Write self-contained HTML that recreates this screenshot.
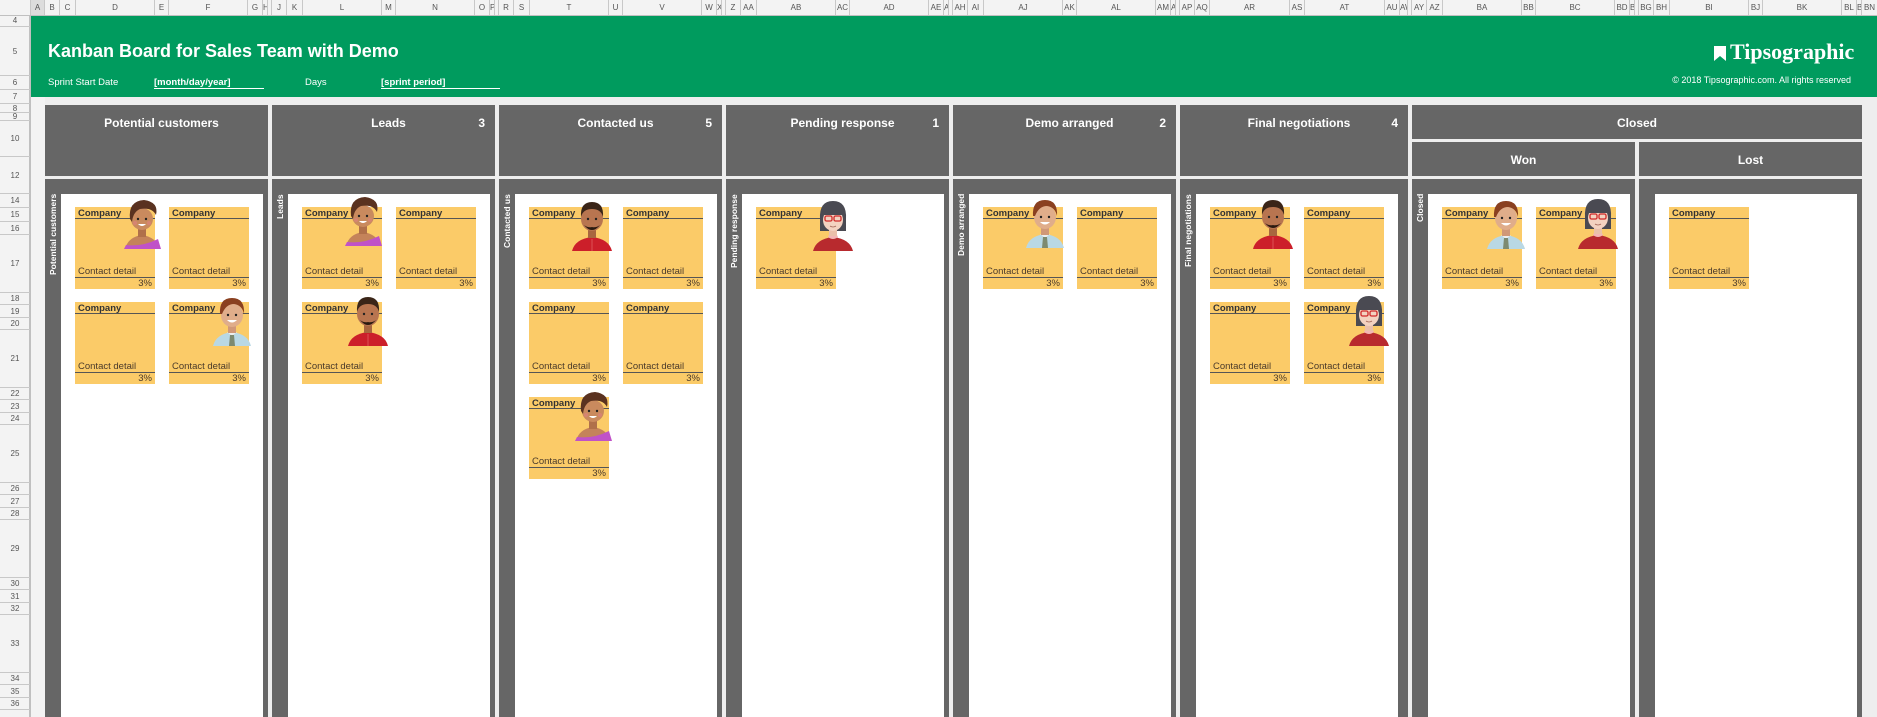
<!DOCTYPE html>
<html><head><meta charset="utf-8">
<style>
*{margin:0;padding:0;box-sizing:border-box}
body{width:1877px;height:717px;overflow:hidden;background:#eeeeee;font-family:"Liberation Sans",Arial,sans-serif;position:relative}
.abs{position:absolute}
#colhdr{position:absolute;left:0;top:0;width:1877px;height:16px;background:#f3f3f3;border-bottom:1px solid #c0c0c0}
.blk{position:absolute;top:0;height:15px;display:flex}
.blk div,.ch{height:15px;border-right:1px solid #c8c8c8;font-size:8px;color:#555;text-align:center;line-height:15px;overflow:hidden;flex:none}
#rowhdr{position:absolute;left:0;top:16px;width:31px;height:701px;background:#f3f3f3;border-right:2px solid #c0c0c0}
.rn{position:absolute;left:0;width:30px;font-size:8px;color:#555;text-align:center;border-bottom:1px solid #c8c8c8}
#green{position:absolute;left:31px;top:16px;width:1846px;height:81px;background:#009b5e;color:#fff}
.hd{position:absolute;background:#666;color:#fff;font-weight:bold;font-size:12px}
.hd .t{position:absolute;left:0;right:0;top:11px;text-align:center}
.hd .n{position:absolute;right:10px;top:11px}
.body{position:absolute;top:179px;height:538px;background:#666}
.wh{position:absolute;top:15px;bottom:0;background:#fff}
.vl{position:absolute;left:0;top:15px;width:16px;writing-mode:vertical-rl;transform:rotate(180deg);color:#fff;font-size:8.5px;font-weight:bold;line-height:16px;text-align:right;height:120px}
.card{position:absolute;width:80px;height:82px;background:#fbcb68;font-size:9.5px;color:#4a3a2a}
.card .c{position:absolute;left:3px;top:1px;font-weight:bold;color:#333}
.card .l1{position:absolute;left:0;right:0;top:11px;height:1px;background:#555}
.card .cd{position:absolute;left:3px;top:59px}
.card .l2{position:absolute;left:0;right:0;top:70px;height:1px;background:#555}
.card .p{position:absolute;right:3px;top:71px}
.av{position:absolute;width:40px;height:54px}
</style></head><body>
<svg width="0" height="0" style="position:absolute">
<defs>
<symbol id="w1" viewBox="0 0 40 54"><path d="M3 54 Q6 42 20 40 Q34 42 38 54Z" fill="#c4835a"/><path d="M2 54 L4 50 Q20 52 36 44 L39 54Z" fill="#c052c8"/><rect x="16" y="32" width="8" height="10" fill="#b0704a"/><circle cx="20" cy="24" r="11" fill="#c98a5e"/><path d="M8 24 Q6 6 22 5 Q37 7 34 20 Q30 12 18 14 Q11 17 10 27Z" fill="#5a3220"/><circle cx="16" cy="24" r="1.2" fill="#222"/><circle cx="24" cy="24" r="1.2" fill="#222"/><path d="M16 29 Q20 33 24 29Z" fill="#fff"/><circle cx="13" cy="28" r="2" fill="#e08080" opacity=".6"/><circle cx="27" cy="28" r="2" fill="#e08080" opacity=".6"/></symbol>
<symbol id="m1" viewBox="0 0 40 54"><path d="M1 54 Q4 42 20 40 Q36 42 39 54Z" fill="#b9d8e4"/><path d="M15 40 L20 44 L25 40 Z" fill="#eee"/><path d="M18 43 L22 43 L23 54 L17 54Z" fill="#7d8a70"/><rect x="16" y="32" width="8" height="9" fill="#d09878"/><ellipse cx="20" cy="23" rx="11" ry="12" fill="#e0ad8a"/><path d="M8 22 Q7 6 20 6 Q33 6 32 22 Q30 13 22 12 Q14 12 10 22Z" fill="#8a4020"/><circle cx="16" cy="23" r="1.2" fill="#222"/><circle cx="24" cy="23" r="1.2" fill="#222"/><path d="M15 28 Q20 33 25 28Z" fill="#fff"/></symbol>
<symbol id="m2" viewBox="0 0 40 54"><path d="M0 54 Q3 42 20 40 Q37 42 40 54Z" fill="#cc1f2a"/><path d="M20 42 L20 54" stroke="#e06060" stroke-width=".8"/><rect x="16" y="32" width="8" height="9" fill="#a8663f"/><ellipse cx="20" cy="22" rx="11" ry="12" fill="#b87550"/><path d="M9 20 Q8 5 20 5 Q32 5 31 20 Q29 12 20 12 Q11 12 9 20Z" fill="#3a2518"/><path d="M12 28 Q20 38 28 28 Q24 31 20 30 Q16 31 12 28Z" fill="#2a1a10"/><circle cx="16" cy="22" r="1.2" fill="#222"/><circle cx="24" cy="22" r="1.2" fill="#222"/></symbol>
<symbol id="w2" viewBox="0 0 40 54"><path d="M0 54 Q3 42 20 40 Q37 42 40 54Z" fill="#b82a2e"/><path d="M15 40 Q20 44 25 40 L24 38 L16 38Z" fill="#f3b6b6"/><path d="M7 22 Q6 4 20 4 Q34 4 33 22 L33 34 L7 34Z" fill="#4a4a52"/><rect x="16" y="31" width="8" height="8" fill="#eac0aa"/><ellipse cx="20" cy="23" rx="10" ry="11" fill="#f3d2c0"/><path d="M9 18 Q10 8 20 8 Q30 8 31 18 L9 18Z" fill="#4a4a52"/><rect x="12" y="19" width="7" height="5" rx="1.5" fill="none" stroke="#d02a2a" stroke-width="1.3"/><rect x="21" y="19" width="7" height="5" rx="1.5" fill="none" stroke="#d02a2a" stroke-width="1.3"/><path d="M17 29 Q20 31 23 29" stroke="#a06050" fill="none" stroke-width=".8"/></symbol>
</defs></svg>

<div id="colhdr">
<div class="ch abs" style="left:0;width:31px;background:#f3f3f3"></div>
<div class="ch abs" style="left:31px;width:14px;background:#ddd">A</div>
<div class="blk" style="left:45px"><div style="width:15px">B</div><div style="width:16px">C</div><div style="width:79px">D</div><div style="width:14px">E</div><div style="width:79px">F</div><div style="width:15px">G</div><div style="width:5px">H</div><div style="width:4px"></div></div>
<div class="blk" style="left:272px"><div style="width:15px">J</div><div style="width:16px">K</div><div style="width:79px">L</div><div style="width:14px">M</div><div style="width:79px">N</div><div style="width:15px">O</div><div style="width:5px">P</div><div style="width:4px"></div></div>
<div class="blk" style="left:499px"><div style="width:15px">R</div><div style="width:16px">S</div><div style="width:79px">T</div><div style="width:14px">U</div><div style="width:79px">V</div><div style="width:15px">W</div><div style="width:5px">X</div><div style="width:4px"></div></div>
<div class="blk" style="left:726px"><div style="width:15px">Z</div><div style="width:16px">AA</div><div style="width:79px">AB</div><div style="width:14px">AC</div><div style="width:79px">AD</div><div style="width:15px">AE</div><div style="width:5px">AF</div><div style="width:4px"></div></div>
<div class="blk" style="left:953px"><div style="width:15px">AH</div><div style="width:16px">AI</div><div style="width:79px">AJ</div><div style="width:14px">AK</div><div style="width:79px">AL</div><div style="width:15px">AM</div><div style="width:5px">AN</div><div style="width:4px"></div></div>
<div class="blk" style="left:1180px"><div style="width:15px">AP</div><div style="width:15px">AQ</div><div style="width:80px">AR</div><div style="width:15px">AS</div><div style="width:80px">AT</div><div style="width:15px">AU</div><div style="width:8px">AW</div><div style="width:4px"></div></div>
<div class="blk" style="left:1412px"><div style="width:15px">AY</div><div style="width:16px">AZ</div><div style="width:79px">BA</div><div style="width:14px">BB</div><div style="width:79px">BC</div><div style="width:15px">BD</div><div style="width:5px">BE</div><div style="width:4px"></div></div>
<div class="blk" style="left:1639px"><div style="width:15px">BG</div><div style="width:16px">BH</div><div style="width:79px">BI</div><div style="width:14px">BJ</div><div style="width:79px">BK</div><div style="width:15px">BL</div><div style="width:5px">BM</div><div style="width:16px">BN</div></div>
</div>

<div id="rowhdr">
<div class="rn" style="top:0;height:11px;line-height:10px">4</div>
<div class="rn" style="top:11px;height:49px;line-height:49px">5</div>
<div class="rn" style="top:60px;height:14px;line-height:14px">6</div>
<div class="rn" style="top:74px;height:14px;line-height:14px">7</div>
<div class="rn" style="top:88px;height:9px;line-height:9px">8</div>
<div class="rn" style="top:97px;height:8px;line-height:8px">9</div>
<div class="rn" style="top:105px;height:36px;line-height:36px">10</div>
<div class="rn" style="top:141px;height:37px;line-height:37px">12</div>
<div class="rn" style="top:178px;height:14px;line-height:14px">14</div>
<div class="rn" style="top:192px;height:14px;line-height:14px">15</div>
<div class="rn" style="top:206px;height:13px;line-height:13px">16</div>
<div class="rn" style="top:219px;height:58px;line-height:58px">17</div>
<div class="rn" style="top:277px;height:12px;line-height:12px">18</div>
<div class="rn" style="top:289px;height:13px;line-height:13px">19</div>
<div class="rn" style="top:302px;height:12px;line-height:12px">20</div>
<div class="rn" style="top:314px;height:58px;line-height:58px">21</div>
<div class="rn" style="top:372px;height:12px;line-height:12px">22</div>
<div class="rn" style="top:384px;height:13px;line-height:13px">23</div>
<div class="rn" style="top:397px;height:12px;line-height:12px">24</div>
<div class="rn" style="top:409px;height:58px;line-height:58px">25</div>
<div class="rn" style="top:467px;height:12px;line-height:12px">26</div>
<div class="rn" style="top:479px;height:13px;line-height:13px">27</div>
<div class="rn" style="top:492px;height:12px;line-height:12px">28</div>
<div class="rn" style="top:504px;height:58px;line-height:58px">29</div>
<div class="rn" style="top:562px;height:12px;line-height:12px">30</div>
<div class="rn" style="top:574px;height:13px;line-height:13px">31</div>
<div class="rn" style="top:587px;height:12px;line-height:12px">32</div>
<div class="rn" style="top:599px;height:58px;line-height:58px">33</div>
<div class="rn" style="top:657px;height:12px;line-height:12px">34</div>
<div class="rn" style="top:669px;height:13px;line-height:13px">35</div>
<div class="rn" style="top:682px;height:12px;line-height:12px">36</div>
</div>
<div class="abs" style="left:31px;top:97px;width:14px;height:620px;background:#f3f3f3"></div>

<div id="green">
<div class="abs" style="left:17px;top:25px;font-size:18px;font-weight:bold">Kanban Board for Sales Team with Demo</div>
<div class="abs" style="left:17px;top:61px;font-size:9.5px">Sprint Start Date</div>
<div class="abs" style="left:123px;top:61px;width:110px;height:12px;border-bottom:1px solid #fff;font-size:9.5px;font-weight:bold">[month/day/year]</div>
<div class="abs" style="left:274px;top:61px;font-size:9.5px">Days</div>
<div class="abs" style="left:350px;top:61px;width:119px;height:12px;border-bottom:1px solid #fff;font-size:9.5px;font-weight:bold">[sprint period]</div>
<svg class="abs" style="left:1683px;top:30px" width="12" height="15" viewBox="0 0 12 15"><path d="M0 0 H12 V15 L6 10 L0 15Z" fill="#fff"/></svg>
<div class="abs" style="left:1699px;top:23px;font-family:'Liberation Serif',serif;font-size:22px;font-weight:bold">Tipsographic</div>
<div class="abs" style="right:26px;top:59px;font-size:9px">© 2018 Tipsographic.com. All rights reserved</div>
</div>

<div class="hd" style="left:45px;top:105px;width:223px;height:71px"><div class="t" style="left:10px">Potential customers</div></div>
<div class="hd" style="left:272px;top:105px;width:223px;height:71px"><div class="t" style="left:10px">Leads</div><div class="n">3</div></div>
<div class="hd" style="left:499px;top:105px;width:223px;height:71px"><div class="t" style="left:10px">Contacted us</div><div class="n">5</div></div>
<div class="hd" style="left:726px;top:105px;width:223px;height:71px"><div class="t" style="left:10px">Pending response</div><div class="n">1</div></div>
<div class="hd" style="left:953px;top:105px;width:223px;height:71px"><div class="t" style="left:10px">Demo arranged</div><div class="n">2</div></div>
<div class="hd" style="left:1180px;top:105px;width:228px;height:71px"><div class="t" style="left:10px">Final negotiations</div><div class="n">4</div></div>
<div class="hd" style="left:1412px;top:105px;width:450px;height:34px"><div class="t">Closed</div></div>
<div class="hd" style="left:1412px;top:142px;width:223px;height:34px"><div class="t">Won</div></div>
<div class="hd" style="left:1639px;top:142px;width:223px;height:34px"><div class="t">Lost</div></div>

<div class="body" style="left:45px;width:223px"><div class="vl">Potential customers</div><div class="wh" style="left:16px;right:5px"></div></div>
<div class="body" style="left:272px;width:223px"><div class="vl">Leads</div><div class="wh" style="left:16px;right:5px"></div></div>
<div class="body" style="left:499px;width:223px"><div class="vl">Contacted us</div><div class="wh" style="left:16px;right:5px"></div></div>
<div class="body" style="left:726px;width:223px"><div class="vl">Pending response</div><div class="wh" style="left:16px;right:5px"></div></div>
<div class="body" style="left:953px;width:223px"><div class="vl">Demo arranged</div><div class="wh" style="left:16px;right:5px"></div></div>
<div class="body" style="left:1180px;width:228px"><div class="vl">Final negotiations</div><div class="wh" style="left:16px;right:10px"></div></div>
<div class="body" style="left:1412px;width:223px"><div class="vl">Closed</div><div class="wh" style="left:16px;right:5px"></div></div>
<div class="body" style="left:1639px;width:223px"><div class="wh" style="left:16px;right:5px"></div></div>

<div class="card" style="left:75px;top:207px"><div class="c">Company</div><div class="l1"></div><div class="cd">Contact detail</div><div class="l2"></div><div class="p">3%</div></div>
<div class="card" style="left:169px;top:207px"><div class="c">Company</div><div class="l1"></div><div class="cd">Contact detail</div><div class="l2"></div><div class="p">3%</div></div>
<div class="card" style="left:75px;top:302px"><div class="c">Company</div><div class="l1"></div><div class="cd">Contact detail</div><div class="l2"></div><div class="p">3%</div></div>
<div class="card" style="left:169px;top:302px"><div class="c">Company</div><div class="l1"></div><div class="cd">Contact detail</div><div class="l2"></div><div class="p">3%</div></div>

<div class="card" style="left:302px;top:207px"><div class="c">Company</div><div class="l1"></div><div class="cd">Contact detail</div><div class="l2"></div><div class="p">3%</div></div>
<div class="card" style="left:396px;top:207px"><div class="c">Company</div><div class="l1"></div><div class="cd">Contact detail</div><div class="l2"></div><div class="p">3%</div></div>
<div class="card" style="left:302px;top:302px"><div class="c">Company</div><div class="l1"></div><div class="cd">Contact detail</div><div class="l2"></div><div class="p">3%</div></div>

<div class="card" style="left:529px;top:207px"><div class="c">Company</div><div class="l1"></div><div class="cd">Contact detail</div><div class="l2"></div><div class="p">3%</div></div>
<div class="card" style="left:623px;top:207px"><div class="c">Company</div><div class="l1"></div><div class="cd">Contact detail</div><div class="l2"></div><div class="p">3%</div></div>
<div class="card" style="left:529px;top:302px"><div class="c">Company</div><div class="l1"></div><div class="cd">Contact detail</div><div class="l2"></div><div class="p">3%</div></div>
<div class="card" style="left:623px;top:302px"><div class="c">Company</div><div class="l1"></div><div class="cd">Contact detail</div><div class="l2"></div><div class="p">3%</div></div>
<div class="card" style="left:529px;top:397px"><div class="c">Company</div><div class="l1"></div><div class="cd">Contact detail</div><div class="l2"></div><div class="p">3%</div></div>

<div class="card" style="left:756px;top:207px"><div class="c">Company</div><div class="l1"></div><div class="cd">Contact detail</div><div class="l2"></div><div class="p">3%</div></div>

<div class="card" style="left:983px;top:207px"><div class="c">Company</div><div class="l1"></div><div class="cd">Contact detail</div><div class="l2"></div><div class="p">3%</div></div>
<div class="card" style="left:1077px;top:207px"><div class="c">Company</div><div class="l1"></div><div class="cd">Contact detail</div><div class="l2"></div><div class="p">3%</div></div>

<div class="card" style="left:1210px;top:207px"><div class="c">Company</div><div class="l1"></div><div class="cd">Contact detail</div><div class="l2"></div><div class="p">3%</div></div>
<div class="card" style="left:1304px;top:207px"><div class="c">Company</div><div class="l1"></div><div class="cd">Contact detail</div><div class="l2"></div><div class="p">3%</div></div>
<div class="card" style="left:1210px;top:302px"><div class="c">Company</div><div class="l1"></div><div class="cd">Contact detail</div><div class="l2"></div><div class="p">3%</div></div>
<div class="card" style="left:1304px;top:302px"><div class="c">Company</div><div class="l1"></div><div class="cd">Contact detail</div><div class="l2"></div><div class="p">3%</div></div>

<div class="card" style="left:1442px;top:207px"><div class="c">Company</div><div class="l1"></div><div class="cd">Contact detail</div><div class="l2"></div><div class="p">3%</div></div>
<div class="card" style="left:1536px;top:207px"><div class="c">Company</div><div class="l1"></div><div class="cd">Contact detail</div><div class="l2"></div><div class="p">3%</div></div>

<div class="card" style="left:1669px;top:207px"><div class="c">Company</div><div class="l1"></div><div class="cd">Contact detail</div><div class="l2"></div><div class="p">3%</div></div>

<svg class="av" style="left:122px;top:195px"><use href="#w1"/></svg>
<svg class="av" style="left:212px;top:292px"><use href="#m1"/></svg>
<svg class="av" style="left:343px;top:192px"><use href="#w1"/></svg>
<svg class="av" style="left:348px;top:292px"><use href="#m2"/></svg>
<svg class="av" style="left:572px;top:197px"><use href="#m2"/></svg>
<svg class="av" style="left:573px;top:387px"><use href="#w1"/></svg>
<svg class="av" style="left:813px;top:197px"><use href="#w2"/></svg>
<svg class="av" style="left:1025px;top:194px"><use href="#m1"/></svg>
<svg class="av" style="left:1253px;top:195px"><use href="#m2"/></svg>
<svg class="av" style="left:1349px;top:292px"><use href="#w2"/></svg>
<svg class="av" style="left:1486px;top:195px"><use href="#m1"/></svg>
<svg class="av" style="left:1578px;top:195px"><use href="#w2"/></svg>
</body></html>
